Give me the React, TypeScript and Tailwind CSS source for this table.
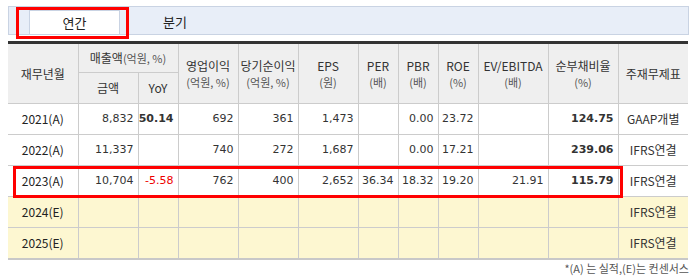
import React from 'react'

const kr = "font-['Noto_Sans_CJK_KR','Noto_Sans',sans-serif]"
const num = "font-['DejaVu_Sans','Noto_Sans_CJK_KR',sans-serif]"

type Row = {
  year: string
  est: boolean
  vals: (string | null)[]
  basis: string
}

const rows: Row[] = [
  { year: '2021(A)', est: false, vals: ['8,832', '50.14', '692', '361', '1,473', null, '0.00', '23.72', null, '124.75'], basis: 'GAAP개별' },
  { year: '2022(A)', est: false, vals: ['11,337', null, '740', '272', '1,687', null, '0.00', '17.21', null, '239.06'], basis: 'IFRS연결' },
  { year: '2023(A)', est: false, vals: ['10,704', '-5.58', '762', '400', '2,652', '36.34', '18.32', '19.20', '21.91', '115.79'], basis: 'IFRS연결' },
  { year: '2024(E)', est: true, vals: [null, null, null, null, null, null, null, null, null, null], basis: 'IFRS연결' },
  { year: '2025(E)', est: true, vals: [null, null, null, null, null, null, null, null, null, null], basis: 'IFRS연결' },
]

const widths = [70, 60, 40, 60, 60, 60, 40, 40, 40, 70, 70, 70]

function Head({ top, unit, last = false }: { top: string; unit?: string; last?: boolean }) {
  return (
    <th
      rowSpan={2}
      className={`font-normal text-center align-middle leading-[16px] border-b border-[#cccccc] ${last ? '' : 'border-r'}`}
    >
      <div className="text-[12px] text-[#333]">{top}</div>
      {unit && <div className="text-[11px] text-[#555]">{unit}</div>}
    </th>
  )
}

export default function App() {
  return (
    <div className={`relative w-[697px] h-[280px] bg-white ${kr}`}>
      {/* tabs */}
      <div className="pt-[6px] px-[8px]">
        <div className="h-[29px] bg-[#e8eef8] border border-[#c9d3e3] flex items-end pl-[20px]">
          <div className="w-[91px] h-[24px] bg-white border-x border-t border-[#c9d3e3] flex items-center justify-center text-[13px] text-[#222]">
            연간
          </div>
          <div className="w-[110px] h-[24px] flex items-center justify-center text-[13px] text-[#222]">분기</div>
        </div>
      </div>

      {/* table */}
      <div className="px-[8px] mt-[6px]">
        <table className="w-[680px] table-fixed border-collapse border-t-[3px] border-t-[#333] border-b-[2px] border-b-[#c8c8c8]">
          <colgroup>
            {widths.map((w, i) => (
              <col key={i} style={{ width: w }} />
            ))}
          </colgroup>
          <thead className="bg-[#efefef]">
            <tr className="h-[30px]">
              <Head top="재무년월" />
              <th colSpan={2} className="font-normal text-center border-r border-b border-[#cccccc] text-[12px] text-[#333]">
                매출액<span className="text-[11px] text-[#555]">(억원, %)</span>
              </th>
              <Head top="영업이익" unit="(억원, %)" />
              <Head top="당기순이익" unit="(억원, %)" />
              <Head top="EPS" unit="(원)" />
              <Head top="PER" unit="(배)" />
              <Head top="PBR" unit="(배)" />
              <Head top="ROE" unit="(%)" />
              <Head top="EV/EBITDA" unit="(배)" />
              <Head top="순부채비율" unit="(%)" />
              <Head top="주재무제표" last />
            </tr>
            <tr className="h-[31px]">
              <th className="font-normal text-center border-r border-b border-[#cccccc] text-[12px] text-[#333]">금액</th>
              <th className="font-normal text-center border-r border-b border-[#cccccc] text-[12px] text-[#333]">YoY</th>
            </tr>
          </thead>
          <tbody>
            {rows.map((r, ri) => (
              <tr key={r.year} className={`h-[31px] ${r.est ? 'bg-[#fdf7d1]' : 'bg-white'}`}>
                <td className={`text-center border-r border-[#cccccc] text-[12px] text-[#222] ${ri < rows.length - 1 ? 'border-b' : ''}`}>
                  {r.year}
                </td>
                {r.vals.map((v, i) => {
                  const bold = i === 1 || i === 9
                  const red = v?.startsWith('-')
                  return (
                    <td
                      key={i}
                      className={`text-right pr-[4px] border-r border-[#cccccc] text-[11px] ${num} ${ri < rows.length - 1 ? 'border-b' : ''} ${
                        bold && !red ? 'font-bold text-[#111]' : ''
                      } ${red ? 'text-[#ee0000]' : 'text-[#333]'}`}
                    >
                      {v}
                    </td>
                  )
                })}
                <td className={`text-center text-[12px] text-[#333] ${ri < rows.length - 1 ? 'border-b border-[#cccccc]' : ''}`}>
                  {r.basis}
                </td>
              </tr>
            ))}
          </tbody>
        </table>
        <div className="text-right text-[11px] text-[#555] leading-[14px] mt-[1px]">*(A) 는 실적,(E)는 컨센서스</div>
      </div>

      {/* highlight annotations */}
      <div className="absolute left-[16px] top-[7px] w-[113px] h-[32px] border-[3px] border-[#ff0000] pointer-events-none" />
      <div className="absolute left-[13px] top-[166px] w-[610px] h-[32px] border-[3px] border-[#ff0000] pointer-events-none" />
    </div>
  )
}
